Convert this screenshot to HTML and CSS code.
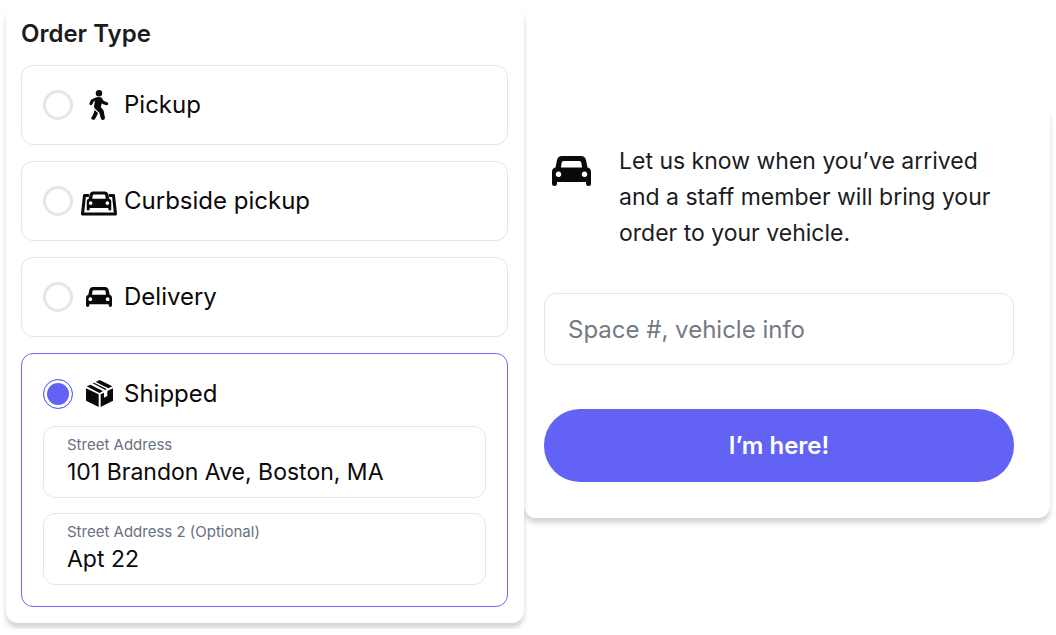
FILE: index.html
```html
<!DOCTYPE html>
<html lang="en">
<head>
<meta charset="utf-8">
<meta name="viewport" content="width=device-width, initial-scale=1">
<title>Order Type</title>
<link rel="stylesheet" href="styles.css">
</head>
<body>
<svg class="defs" aria-hidden="true">
  <symbol id="car" viewBox="0 0 39 30">
    <path fill-rule="evenodd" d="M10 0H29Q33 0 34 4L35.500 11.500Q39 12 39 16V27.500Q39 30 36.500 30T34 27.500V26H5V27.500Q5 30 2.500 30T0 27.500V16Q0 12 3.500 11.500L5 4Q6 0 10 0ZM11.500 5Q10 5 9.700 6.500L9 11.500H30L29.300 6.500Q29 5 27.500 5ZM6.500 15.500a2.800 2.800 0 1 0 .01 0ZM32.500 15.500a2.800 2.800 0 1 0 .01 0Z"/>
  </symbol>
</svg>
<main class="page">
  <section class="panel order" aria-labelledby="order-title">
    <h1 class="title" id="order-title">Order Type</h1>
    <div class="options">
      <label class="option choice">
        <input class="radio" type="radio" name="order-type">
        <span class="icon">
          <svg width="20" height="30" viewBox="0 0 20 30" aria-hidden="true">
            <circle cx="10" cy="3.200" r="3.200"/>
            <path d="M5.500 8Q9 6.200 12.400 7.400L14.800 11 18.300 12.300Q20 13.500 18.600 15.100L17.500 15.300 13.600 14 12.800 13.200 11.800 17 14.600 20.600 16 28Q15.600 30.200 13.300 29.900L12 28.900 10.300 22.700 5.700 18.500 5 16.200 6 11 4.500 11.800 3.200 14.500Q1.700 15.900.4 14.200L.5 13 2 9.700Z"/>
            <path d="M5.500 19.900 9 23 7.500 26.400 5.600 29.500Q3.600 30.500 2.200 28.800L2.400 27.400 4.400 24Z"/>
          </svg>
        </span>
        <span>Pickup</span>
      </label>
      <label class="option choice">
        <input class="radio" type="radio" name="order-type">
        <span class="icon">
          <svg class="kerb-icon" width="36" height="26" viewBox="0 0 36 26" aria-hidden="true">
            <path class="kerb" d="M8 5.500H3.500L1.500 24H34.500L32.500 5.500H28"/>
            <use href="#car" x="5.500" y="1" width="25" height="20"/>
          </svg>
        </span>
        <span>Curbside pickup</span>
      </label>
      <label class="option choice">
        <input class="radio" type="radio" name="order-type">
        <span class="icon"><svg width="26" height="20" aria-hidden="true"><use href="#car"/></svg></span>
        <span>Delivery</span>
      </label>
      <div class="option option-selected">
        <label class="choice">
          <input class="radio" type="radio" name="order-type" checked>
          <span class="icon">
            <svg width="27" height="27" viewBox="0 0 81 81" aria-hidden="true">
              <path d="M0 25 38 43V81L0 62ZM44 43 54 38V53L64 48V33L81 25V62L44 81Z"/>
              <path d="M29 6 41 0 79 19 67 25ZM2 19 13 14 51 33 40 39ZM20 10 24 8 62 27 58 30Z"/>
            </svg>
          </span>
          <span>Shipped</span>
        </label>
        <div class="fields">
          <div class="field">
            <label class="field-label" for="street">Street Address</label>
            <input class="field-input" id="street" type="text" value="101 Brandon Ave, Boston, MA">
          </div>
          <div class="field">
            <label class="field-label" for="street2">Street Address 2 (Optional)</label>
            <input class="field-input" id="street2" type="text" value="Apt 22">
          </div>
        </div>
      </div>
    </div>
  </section>
  <section class="panel arrival">
    <div class="message">
      <svg class="message-icon" width="39" height="30" aria-hidden="true"><use href="#car"/></svg>
      <p class="message-text">Let us know when you’ve arrived and a staff member will bring your order to your vehicle.</p>
    </div>
    <input class="vehicle" type="text" aria-label="Space number, vehicle info" placeholder="Space #, vehicle info">
    <button class="submit" type="button">I’m here!</button>
  </section>
</main>
</body>
</html>
```
FILE: styles.css
```css
* {
  box-sizing: border-box;
}

body {
  margin: 0;
  background: #fff;
  color: #0a0a0a;
  font-family: Inter, "Open Sans", sans-serif;
  font-size: 24px;
  line-height: 36px;
}

svg {
  fill: #0a0a0a;
}

.defs {
  position: absolute;
  width: 0;
  height: 0;
}

.page {
  display: grid;
  grid-template-columns: 518fr 526fr;
  align-items: start;
  padding: 6px;
}

.panel {
  background: #fff;
  border-radius: 12px;
  box-shadow: 0 5px 5px rgba(0, 0, 0, 0.17);
}

.order {
  position: relative;
  z-index: 1;
  padding: 10px 16px 16px 15px;
}

.title {
  margin: 0 0 13px;
  color: #1b1c1e;
  font-size: 24px;
  font-weight: 600;
  line-height: 36px;
}

.options {
  display: grid;
  gap: 16px;
}

.option {
  padding: 21px;
  border: 1px solid #e2e6ee;
  border-radius: 12px;
}

.option-selected {
  border-color: #7c60f6;
}

.choice {
  display: flex;
  align-items: center;
  height: 80px;
}

.option-selected .choice {
  height: 37px;
}

.radio {
  appearance: none;
  flex: none;
  width: 30px;
  height: 30px;
  margin: 0;
  border: 3px solid #e2e6ee;
  border-radius: 50%;
}

.radio:checked {
  border: 1px solid #6262f5;
  background: #6262f5;
  box-shadow: inset 0 0 0 3px #fff;
}

.icon {
  display: flex;
  flex: none;
  justify-content: center;
  width: 36px;
  margin: 0 7px 0 8px;
}

.kerb-icon {
  margin-top: 3px;
}

.kerb {
  fill: none;
  stroke: #0a0a0a;
  stroke-width: 3;
  stroke-linejoin: round;
}

.fields {
  display: grid;
  gap: 15px;
  margin-top: 14px;
}

.field {
  display: flex;
  flex-direction: column;
  height: 72px;
  padding: 7px 23px;
  border: 1px solid #e2e6ee;
  border-radius: 12px;
}

.field-label {
  color: #697080;
  font-size: 15px;
  line-height: 22px;
}

.field-input {
  width: 100%;
  height: 32px;
  padding: 0;
  border: 0;
  background: none;
  color: #0a0a0a;
  font: inherit;
  font-size: 23px;
}

.arrival {
  display: grid;
  margin-top: 100px;
  padding: 37px 36px 36px 20px;
}

.message {
  display: flex;
  gap: 28px;
  padding-left: 8px;
}

.message-icon {
  flex: none;
  margin-top: 13px;
}

.message-text {
  margin: 0;
  color: #1b1c1e;
  font-size: 23px;
}

.vehicle {
  width: 100%;
  height: 72px;
  margin: 42px 0 44px;
  padding: 0 23px;
  border: 1px solid #e2e6ee;
  border-radius: 12px;
  color: #0a0a0a;
  font: inherit;
}

.vehicle::placeholder {
  color: #747a85;
  opacity: 1;
}

.submit {
  height: 73px;
  border: 0;
  border-radius: 36px;
  background: #6262f5;
  color: #fff;
  font: inherit;
  font-weight: 600;
}
```
